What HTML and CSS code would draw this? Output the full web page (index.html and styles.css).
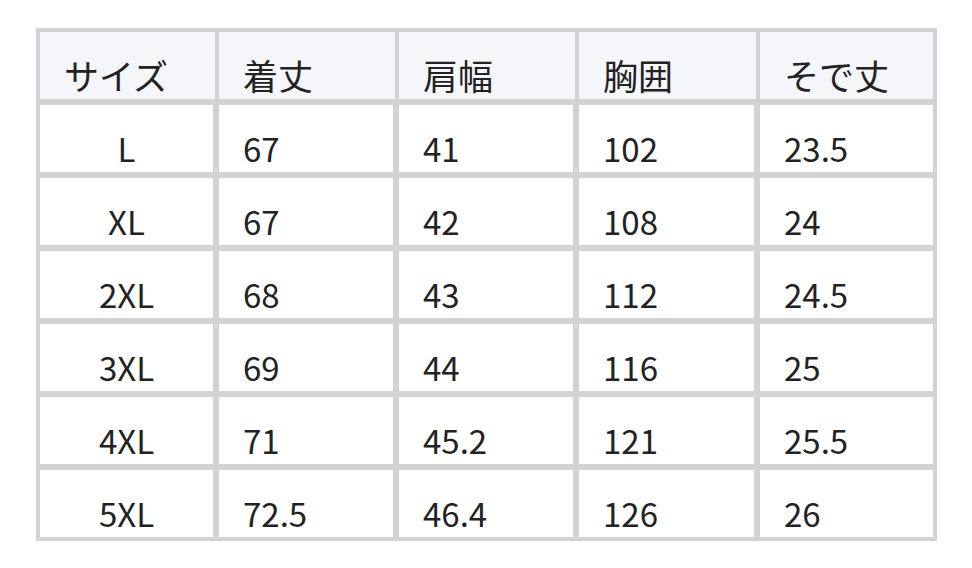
FILE: index.html
```html
<!DOCTYPE html>
<html lang="ja">
<head>
<meta charset="utf-8">
<title>サイズ表</title>
<link rel="stylesheet" href="styles.css">
</head>
<body>
<div class="wrap">
<table class="size-table">
  <thead>
    <tr>
      <th>サイズ</th><th>着丈</th><th>肩幅</th><th>胸囲</th><th>そで丈</th>
    </tr>
  </thead>
  <tbody>
    <tr><td>L</td><td>67</td><td>41</td><td>102</td><td>23.5</td></tr>
    <tr><td>XL</td><td>67</td><td>42</td><td>108</td><td>24</td></tr>
    <tr><td>2XL</td><td>68</td><td>43</td><td>112</td><td>24.5</td></tr>
    <tr><td>3XL</td><td>69</td><td>44</td><td>116</td><td>25</td></tr>
    <tr><td>4XL</td><td>71</td><td>45.2</td><td>121</td><td>25.5</td></tr>
    <tr><td>5XL</td><td>72.5</td><td>46.4</td><td>126</td><td>26</td></tr>
  </tbody>
</table>
</div>
</body>
</html>
```
FILE: styles.css
```css
html, body {
  margin: 0;
  padding: 0;
  background: #ffffff;
}

.wrap {
  padding: 28px 0 0 36px;
}

.size-table {
  width: 901px;
  table-layout: fixed;
  border-collapse: separate;
  border-spacing: 0;
  border: 4px solid #d3d3d3;
  font-family: "Noto Sans CJK JP", "Noto Sans", sans-serif;
  color: #222222;
}

.size-table th,
.size-table td {
  box-sizing: border-box;
  text-align: left;
  vertical-align: top;
  padding: 0 0 0 24px;
  white-space: nowrap;
}

.size-table th {
  background: #f5f6fa;
  font-weight: 400;
  font-size: 35px;
  line-height: 48px;
  padding-top: 19px;
  height: 73px;
  border-right: 4px solid #d3d3d3;
  border-bottom: 6px solid #d3d3d3;
}

.size-table th:nth-child(1) { width: 179px; }
.size-table th:nth-child(2) { width: 180px; }
.size-table th:nth-child(3) { width: 180px; }
.size-table th:nth-child(4) { width: 181px; }
.size-table th:nth-child(5) { width: 173px; border-right: 0; }

.size-table td {
  font-size: 33px;
  line-height: 46px;
  padding-top: 20px;
  padding-bottom: 1px;
  height: 73px;
  border-right: 6px solid #d3d3d3;
  border-bottom: 6px solid #d3d3d3;
}

.size-table td:first-child {
  text-align: center;
  padding-left: 0;
}

.size-table td:last-child {
  border-right: 0;
}

.size-table tbody tr:last-child td {
  border-bottom: 0;
  height: 67px;
}
```
